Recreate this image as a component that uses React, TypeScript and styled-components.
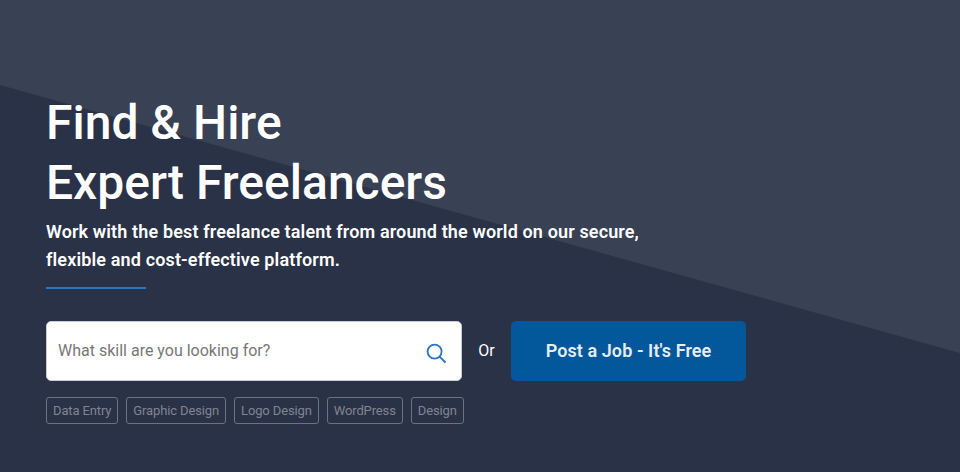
import styled, { createGlobalStyle } from "styled-components";

const tags = ["Data Entry", "Graphic Design", "Logo Design", "WordPress", "Design"];

export default function App() {
  return (
    <>
      <GlobalStyle />
      <Hero>
        <Content>
          <Title>
            Find &amp; Hire
            <br />
            Expert Freelancers
          </Title>
          <Lead>
            Work with the best freelance talent from around the world on our secure,
            <br />
            flexible and cost-effective platform.
          </Lead>
          <Divider />
          <SearchRow>
            <SearchBox>
              <SearchInput placeholder="What skill are you looking for?" />
              <SearchIcon width="20" height="20" viewBox="0 0 20 20" fill="none">
                <circle cx="8.6" cy="8.6" r="7" stroke="#2a74c4" strokeWidth="1.8" />
                <path d="M13.8 13.8L19 19" stroke="#2a74c4" strokeWidth="1.8" strokeLinecap="round" />
              </SearchIcon>
            </SearchBox>
            <OrLabel>Or</OrLabel>
            <PostButton>Post a Job - It's Free</PostButton>
          </SearchRow>
          <TagList>
            {tags.map((tag) => (
              <Tag key={tag}>{tag}</Tag>
            ))}
          </TagList>
        </Content>
      </Hero>
    </>
  );
}

const GlobalStyle = createGlobalStyle`
  html, body {
    margin: 0;
    padding: 0;
    background: #2a3247;
  }
  * {
    box-sizing: border-box;
  }
`;

const Hero = styled.section`
  width: 960px;
  height: 472px;
  overflow: hidden;
  background: linear-gradient(
    195.6deg,
    #394154 0,
    #394154 calc(50% - 16.9px),
    #2a3247 calc(50% - 15.9px)
  );
  font-family: Roboto, "Liberation Sans", sans-serif;
`;

const Content = styled.div`
  display: flex;
  flex-direction: column;
  padding: 93px 0 0 46px;
`;

const Title = styled.h1`
  margin: 0;
  font-size: 48px;
  font-weight: 500;
  line-height: 60px;
  color: #ffffff;
`;

const Lead = styled.p`
  margin: 5px 0 0;
  font-size: 18px;
  font-weight: 600;
  line-height: 28px;
  letter-spacing: 0.14px;
  color: #ffffff;
`;

const Divider = styled.div`
  width: 100px;
  height: 2px;
  margin-top: 13px;
  background: #2a74c4;
`;

const SearchRow = styled.div`
  display: flex;
  align-items: center;
  margin-top: 32px;
`;

const SearchBox = styled.div`
  display: flex;
  align-items: center;
  justify-content: space-between;
  width: 416px;
  height: 60px;
  padding: 0 15px 0 11px;
  background: #ffffff;
  border: 1px solid #c9ced6;
  border-radius: 5px;
`;

const SearchInput = styled.input`
  flex: 1;
  border: 0;
  outline: 0;
  padding: 0 0 2px;
  background: transparent;
  font-family: inherit;
  font-size: 16px;
  color: #333333;

  &::placeholder {
    color: #777777;
    opacity: 1;
  }
`;

const SearchIcon = styled.svg`
  flex: none;
  margin-top: 3px;
`;

const OrLabel = styled.span`
  width: 49px;
  padding-bottom: 2px;
  text-align: center;
  font-size: 16px;
  color: #ffffff;
`;

const PostButton = styled.button`
  width: 235px;
  height: 60px;
  padding: 0 0 2px;
  border: 0;
  border-radius: 5px;
  background: #03589b;
  font-family: inherit;
  font-size: 18px;
  font-weight: 600;
  letter-spacing: 0.08px;
  color: #e6edf3;
`;

const TagList = styled.div`
  display: flex;
  gap: 8px;
  margin-top: 16px;
`;

const Tag = styled.span`
  display: flex;
  align-items: center;
  height: 27px;
  padding: 0 6px;
  border: 1px solid #6b7280;
  border-radius: 3px;
  font-size: 13px;
  letter-spacing: -0.13px;
  color: #808590;
`;
